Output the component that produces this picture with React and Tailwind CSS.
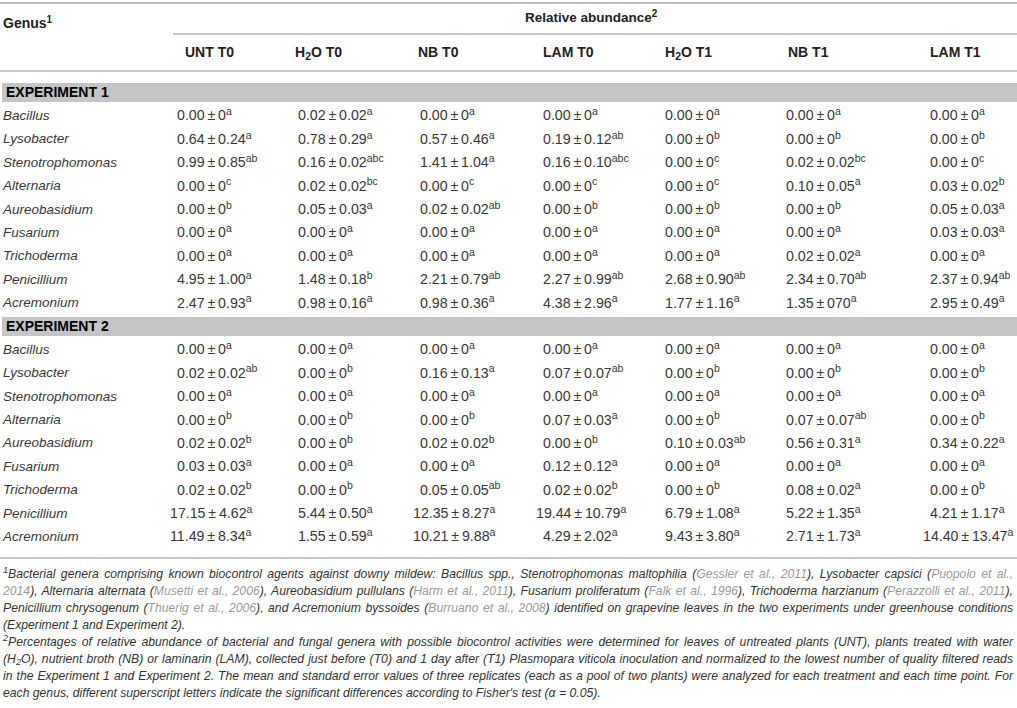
const EXP1 = [
  ["Bacillus", "0.00|0|a", "0.02|0.02|a", "0.00|0|a", "0.00|0|a", "0.00|0|a", "0.00|0|a", "0.00|0|a"],
  ["Lysobacter", "0.64|0.24|a", "0.78|0.29|a", "0.57|0.46|a", "0.19|0.12|ab", "0.00|0|b", "0.00|0|b", "0.00|0|b"],
  ["Stenotrophomonas", "0.99|0.85|ab", "0.16|0.02|abc", "1.41|1.04|a", "0.16|0.10|abc", "0.00|0|c", "0.02|0.02|bc", "0.00|0|c"],
  ["Alternaria", "0.00|0|c", "0.02|0.02|bc", "0.00|0|c", "0.00|0|c", "0.00|0|c", "0.10|0.05|a", "0.03|0.02|b"],
  ["Aureobasidium", "0.00|0|b", "0.05|0.03|a", "0.02|0.02|ab", "0.00|0|b", "0.00|0|b", "0.00|0|b", "0.05|0.03|a"],
  ["Fusarium", "0.00|0|a", "0.00|0|a", "0.00|0|a", "0.00|0|a", "0.00|0|a", "0.00|0|a", "0.03|0.03|a"],
  ["Trichoderma", "0.00|0|a", "0.00|0|a", "0.00|0|a", "0.00|0|a", "0.00|0|a", "0.02|0.02|a", "0.00|0|a"],
  ["Penicillium", "4.95|1.00|a", "1.48|0.18|b", "2.21|0.79|ab", "2.27|0.99|ab", "2.68|0.90|ab", "2.34|0.70|ab", "2.37|0.94|ab"],
  ["Acremonium", "2.47|0.93|a", "0.98|0.16|a", "0.98|0.36|a", "4.38|2.96|a", "1.77|1.16|a", "1.35|070|a", "2.95|0.49|a"],
];

const EXP2 = [
  ["Bacillus", "0.00|0|a", "0.00|0|a", "0.00|0|a", "0.00|0|a", "0.00|0|a", "0.00|0|a", "0.00|0|a"],
  ["Lysobacter", "0.02|0.02|ab", "0.00|0|b", "0.16|0.13|a", "0.07|0.07|ab", "0.00|0|b", "0.00|0|b", "0.00|0|b"],
  ["Stenotrophomonas", "0.00|0|a", "0.00|0|a", "0.00|0|a", "0.00|0|a", "0.00|0|a", "0.00|0|a", "0.00|0|a"],
  ["Alternaria", "0.00|0|b", "0.00|0|b", "0.00|0|b", "0.07|0.03|a", "0.00|0|b", "0.07|0.07|ab", "0.00|0|b"],
  ["Aureobasidium", "0.02|0.02|b", "0.00|0|b", "0.02|0.02|b", "0.00|0|b", "0.10|0.03|ab", "0.56|0.31|a", "0.34|0.22|a"],
  ["Fusarium", "0.03|0.03|a", "0.00|0|a", "0.00|0|a", "0.12|0.12|a", "0.00|0|a", "0.00|0|a", "0.00|0|a"],
  ["Trichoderma", "0.02|0.02|b", "0.00|0|b", "0.05|0.05|ab", "0.02|0.02|b", "0.00|0|b", "0.08|0.02|a", "0.00|0|b"],
  ["Penicillium", "17.15|4.62|a", "5.44|0.50|a", "12.35|8.27|a", "19.44|10.79|a", "6.79|1.08|a", "5.22|1.35|a", "4.21|1.17|a"],
  ["Acremonium", "11.49|8.34|a", "1.55|0.59|a", "10.21|9.88|a", "4.29|2.02|a", "9.43|3.80|a", "2.71|1.73|a", "14.40|13.47|a"],
];

const ROW = "grid grid-cols-[177px_121px_122px_123px_122px_121px_144px_87px] items-center h-[23.4px]";

function Value({ cell }) {
  const [mean, se, sig] = cell.split("|");
  const wide = mean.length > 4;
  return (
    <span className={`whitespace-nowrap text-[14.2px] ${wide ? "-ml-[7px]" : ""}`}>
      {mean}{"\u2009±\u2009"}{se}<sup className="text-[10.5px]">{sig}</sup>
    </span>
  );
}

function ExpBar({ label }) {
  return (
    <div className="flex items-center h-[23.4px]">
      <div className="flex items-center w-full h-[19px] ml-[2px] pl-[4px] bg-[#c4c5c7] text-black font-bold text-[14px]">
        {label}
      </div>
    </div>
  );
}

function Rows({ data }) {
  return data.map(([genus, ...cells]) => (
    <div key={genus} className={ROW}>
      <div className="pl-[3px] italic">{genus}</div>
      {cells.map((c, i) => (
        <div key={i}>
          <Value cell={c} />
        </div>
      ))}
    </div>
  ));
}

const Cite = ({ children }) => <span className="text-[#9a9a9a]">{children}</span>;

const LINE = "h-[17px] leading-[17px] whitespace-nowrap text-justify [text-align-last:justify]";
const LAST = "h-[17px] leading-[17px] whitespace-nowrap";

export default function App() {
  return (
    <div className="w-[1017px] h-[708px] overflow-hidden bg-white text-[#383838] text-[13.5px] font-['Liberation_Sans',Arial,sans-serif]">
      {/* header */}
      <div className="h-[2px] mt-[2px] bg-[#bdbdbd]" />
      <div className="flex">
        <div className="w-[173px] pl-[3px] pt-[9px] font-bold text-[#222] leading-[20px] text-[14px]">
          Genus<sup className="text-[10px]">1</sup>
        </div>
        <div className="flex-1">
          <div className="h-[29px] flex items-center pl-[352px] font-bold text-[#222]">
            Relative abundance<sup className="text-[10px]">2</sup>
          </div>
          <div className="h-[2px] bg-[#c8c8c8]" />
          <div className="ml-[4px] h-[35px] grid grid-cols-[121px_122px_123px_122px_121px_144px_87px] items-center font-bold text-[#222] text-[14px]">
            <div className="pl-[8px]">UNT T0</div>
            <div className="-ml-[3px]">H<sub>2</sub>O T0</div>
            <div className="-ml-[2px]">NB T0</div>
            <div>LAM T0</div>
            <div>H<sub>2</sub>O T1</div>
            <div className="pl-[2px]">NB T1</div>
            <div>LAM T1</div>
          </div>
        </div>
      </div>
      <div className="h-[2px] bg-[#c8c8c8]" />

      {/* body */}
      <div className="mt-[9px]">
        <ExpBar label="EXPERIMENT 1" />
        <Rows data={EXP1} />
        <ExpBar label="EXPERIMENT 2" />
        <Rows data={EXP2} />
      </div>
      <div className="h-[2px] mt-[8px] bg-[#c8c8c8]" />

      {/* footnotes */}
      <div className="pt-[7px] pl-[3px] pr-[4px] italic text-[12.2px] text-[#333]">
        <div className={LINE}>
          <sup>1</sup>Bacterial genera comprising known biocontrol agents against downy mildew: Bacillus spp., Stenotrophomonas maltophilia (<Cite>Gessler et al., 2011</Cite>), Lysobacter capsici (<Cite>Puopolo et al.,</Cite>
        </div>
        <div className={LINE}>
          <Cite>2014</Cite>), Alternaria alternata (<Cite>Musetti et al., 2006</Cite>), Aureobasidium pullulans (<Cite>Harm et al., 2011</Cite>), Fusarium proliferatum (<Cite>Falk et al., 1996</Cite>), Trichoderma harzianum (<Cite>Perazzolli et al., 2011</Cite>),
        </div>
        <div className={LINE}>
          Penicillium chrysogenum (<Cite>Thuerig et al., 2006</Cite>), and Acremonium byssoides (<Cite>Burruano et al., 2008</Cite>) identified on grapevine leaves in the two experiments under greenhouse conditions
        </div>
        <div className={LAST}>(Experiment 1 and Experiment 2).</div>
        <div className={LINE}>
          <sup>2</sup>Percentages of relative abundance of bacterial and fungal genera with possible biocontrol activities were determined for leaves of untreated plants (UNT), plants treated with water
        </div>
        <div className={LINE}>
          (H<sub>2</sub>O), nutrient broth (NB) or laminarin (LAM), collected just before (T0) and 1 day after (T1) Plasmopara viticola inoculation and normalized to the lowest number of quality filtered reads
        </div>
        <div className={LINE}>
          in the Experiment 1 and Experiment 2. The mean and standard error values of three replicates (each as a pool of two plants) were analyzed for each treatment and each time point. For
        </div>
        <div className={LAST}>
          each genus, different superscript letters indicate the significant differences according to Fisher's test (α = 0.05).
        </div>
      </div>
    </div>
  );
}
